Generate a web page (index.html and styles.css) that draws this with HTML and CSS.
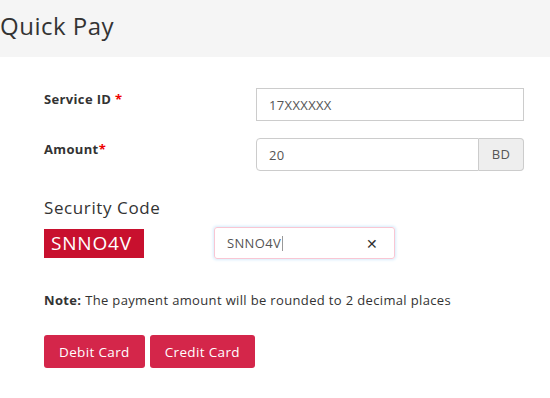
FILE: index.html
```html
<!DOCTYPE html>
<html>
<head>
    <title>Quick Pay</title>
    <link rel="stylesheet" href="styles.css">
</head>
<body>
    <div class="pageHeader">
        <h1>Quick Pay</h1>
    </div>
    <div class="payForm">
        <div class="formRow">
            <label class="fieldLabel">Service ID <span class="req">*</span></label>
            <input class="textInput" type="text" value="17XXXXXX">
        </div>
        <div class="formRow">
            <label class="fieldLabel">Amount<span class="req">*</span></label>
            <div class="inputGroup">
                <input class="textInput grouped" type="text" value="20">
                <span class="addon">BD</span>
            </div>
        </div>

        <h2 class="securityTitle">Security Code</h2>
        <div class="captchaRow">
            <div class="captchaImage">SNNO4V</div>
            <div class="captchaInput">
                <span class="captchaValue">SNNO4V</span><span class="caret"></span>
                <span class="clearBtn">&#x2715;</span>
            </div>
        </div>

        <p class="note"><b>Note:</b> The payment amount will be rounded to 2 decimal places</p>

        <div class="buttons">
            <button class="payButton">Debit Card</button>
            <button class="payButton">Credit Card</button>
        </div>
    </div>
</body>
</html>
```

FILE: styles.css
```css
body {
    margin: 0;
    font-family: "Open Sans", "Noto Sans", sans-serif;
    letter-spacing: 0.35px;
    color: #333;
    background-color: #fff;
}

.pageHeader {
    background-color: #f5f5f5;
    height: 57px;
}

.pageHeader h1 {
    margin: 0;
    padding-top: 11px;
    font-size: 24px;
    font-weight: normal;
    letter-spacing: 0.5px;
    line-height: 30px;
    color: #333;
}

.payForm {
    padding: 31px 0 0 44px;
}

.formRow {
    display: flex;
    align-items: flex-start;
    margin-bottom: 17px;
}

.fieldLabel {
    width: 212px;
    font-size: 13px;
    font-weight: bold;
    padding-top: 2px;
}

.req {
    color: #e00;
}

.textInput {
    box-sizing: border-box;
    width: 268px;
    height: 33px;
    border: 1px solid #ccc;
    padding: 0 12px;
    font-family: inherit;
    letter-spacing: inherit;
    font-size: 13px;
    color: #555;
    outline: none;
}

.inputGroup {
    display: flex;
    width: 268px;
}

.textInput.grouped {
    flex: 1;
    width: auto;
    border-radius: 4px 0 0 4px;
}

.addon {
    box-sizing: border-box;
    width: 45px;
    height: 33px;
    line-height: 31px;
    text-align: center;
    background-color: #eee;
    border: 1px solid #ccc;
    border-left: none;
    border-radius: 0 4px 4px 0;
    font-size: 13px;
    color: #555;
}

.securityTitle {
    margin: 25px 0 7px 0;
    font-size: 17px;
    font-weight: normal;
    letter-spacing: 0.6px;
    line-height: 24px;
}

.captchaRow {
    display: flex;
    align-items: center;
    gap: 70px;
}

.captchaImage {
    width: 100px;
    height: 29px;
    line-height: 29px;
    background-color: #c8102e;
    color: #fff;
    font-size: 19px;
    letter-spacing: 0.8px;
    padding-left: 7px;
    box-sizing: border-box;
}

.captchaInput {
    box-sizing: border-box;
    width: 181px;
    height: 32px;
    display: flex;
    align-items: center;
    padding: 0 12px;
    border: 1px solid #f9c6d3;
    border-radius: 3px;
    box-shadow: 0 0 3px 1px #d6ecfb;
    font-size: 13px;
    color: #555;
}

.caret {
    width: 1px;
    height: 15px;
    background-color: #999;
    margin-left: 1px;
}

.clearBtn {
    margin-left: auto;
    font-size: 14px;
    color: #333;
    padding-right: 4px;
}

.note {
    margin: 32px 0 0 0;
    font-size: 13px;
    line-height: 18px;
}

.buttons {
    display: flex;
    gap: 5px;
    margin-top: 26px;
}

.payButton {
    height: 33px;
    padding: 0 15px;
    border: none;
    border-radius: 3px;
    background-color: #d4264a;
    color: #fff;
    font-family: inherit;
    letter-spacing: inherit;
    font-size: 13.5px;
}
```
